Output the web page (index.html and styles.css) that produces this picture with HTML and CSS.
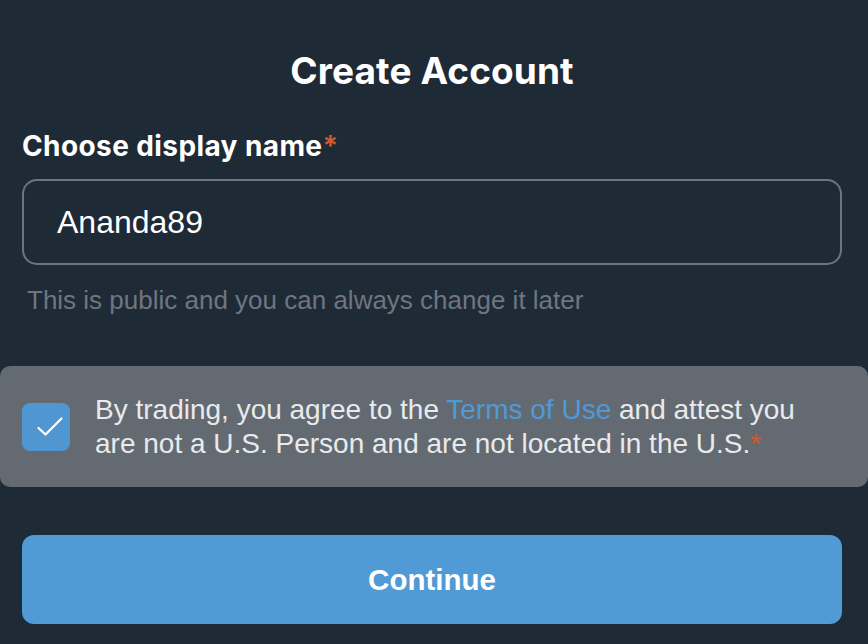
FILE: index.html
```html
<!DOCTYPE html>
<html lang="en">
<head>
<meta charset="utf-8">
<title>Create Account</title>
<link rel="stylesheet" href="styles.css">
</head>
<body>
<main class="page">
  <h1 class="title">Create Account</h1>
  <label class="label" for="name">Choose display name<span class="req">*</span></label>
  <div class="input"><span class="input-value">Ananda89</span></div>
  <p class="helper">This is public and you can always change it later</p>
  <div class="consent">
    <span class="checkbox">
      <svg width="24" height="24" viewBox="0 0 24 24" aria-hidden="true"><path d="M4.5 13 L11.5 19.5 L27.5 3.5" fill="none" stroke="#ffffff" stroke-width="2.2" stroke-linecap="round" stroke-linejoin="round"/></svg>
    </span>
    <p class="consent-text">By trading, you agree to the <a class="link" href="#">Terms of Use</a> and attest you are not a U.S. Person and are not located in the U.S.<span class="req">*</span></p>
  </div>
  <button class="btn" type="button">Continue</button>
</main>
</body>
</html>
```
FILE: styles.css
```css
html, body {
  margin: 0;
  padding: 0;
  background: #1f2a37;
}
body {
  font-family: "Liberation Sans", Arial, sans-serif;
  color: #ffffff;
  overflow: hidden;
}
.page {
  display: flex;
  flex-direction: column;
  padding: 51px 26px 0 22px;
}
.title {
  margin: 0;
  font-family: Inter, "Liberation Sans", sans-serif;
  font-weight: 700;
  font-size: 37px;
  line-height: 40px;
  text-align: center;
  letter-spacing: 0.1px;
}
.label {
  margin-top: 39px;
  font-family: Inter, "Liberation Sans", sans-serif;
  font-weight: 700;
  font-size: 28px;
  line-height: 32px;
  letter-spacing: 0.4px;
}
.req {
  color: #d2592f;
}
.input {
  margin-top: 17px;
  box-sizing: border-box;
  height: 86px;
  border: 2px solid #6f747a;
  border-radius: 15px;
  display: flex;
  align-items: center;
  padding-left: 33px;
}
.input-value {
  font-size: 32px;
  color: #ffffff;
}
.helper {
  margin: 21px 0 0 5px;
  font-size: 26px;
  line-height: 28px;
  color: #6e7681;
}
.consent {
  margin: 52px -26px 0 -22px;
  box-sizing: border-box;
  height: 121px;
  background: #646a72;
  border-radius: 10px;
  display: flex;
  align-items: center;
  padding: 0 40px 0 22px;
}
.checkbox {
  flex: none;
  width: 48px;
  height: 48px;
  border-radius: 8px;
  background: #5096d0;
  display: flex;
  align-items: center;
  justify-content: center;
}
.checkbox svg {
  width: 24px;
  height: 24px;
  overflow: visible;
}
.consent-text {
  margin: 0 0 0 25px;
  font-size: 28px;
  line-height: 34px;
  color: #e8eaec;
}
.link {
  color: #4f9ad6;
  text-decoration: none;
}
.btn {
  margin-top: 48px;
  height: 89px;
  border: 0;
  border-radius: 12px;
  background: #509bd5;
  color: #ffffff;
  font-family: "Liberation Sans", Arial, sans-serif;
  font-weight: 700;
  font-size: 29.5px;
}
```
